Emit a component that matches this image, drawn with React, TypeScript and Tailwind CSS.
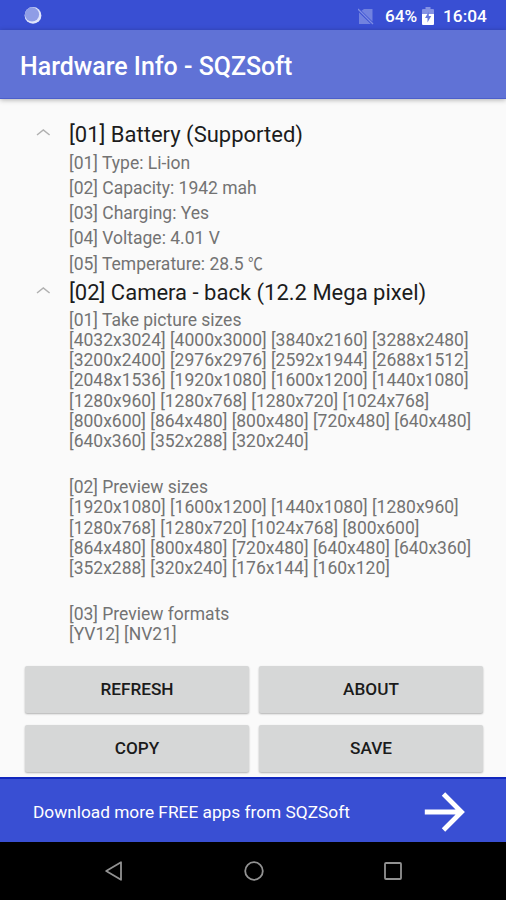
const battery = [
  ['[01] Type: Li-ion'],
  ['[02] Capacity: 1942 mah'],
  ['[03] Charging: Yes'],
  ['[04] Voltage: 4.01 V'],
  ['[05] Temperature: 28.5 ', '℃'],
];

const camera = [
  [
    '[01] Take picture sizes',
    '[4032x3024] [4000x3000] [3840x2160] [3288x2480]',
    '[3200x2400] [2976x2976] [2592x1944] [2688x1512]',
    '[2048x1536] [1920x1080] [1600x1200] [1440x1080]',
    '[1280x960] [1280x768] [1280x720] [1024x768]',
    '[800x600] [864x480] [800x480] [720x480] [640x480]',
    '[640x360] [352x288] [320x240]',
  ],
  [
    '[02] Preview sizes',
    '[1920x1080] [1600x1200] [1440x1080] [1280x960]',
    '[1280x768] [1280x720] [1024x768] [800x600]',
    '[864x480] [800x480] [720x480] [640x480] [640x360]',
    '[352x288] [320x240] [176x144] [160x120]',
  ],
  ['[03] Preview formats', '[YV12] [NV21]'],
];

function GroupHeading({ title }: { title: string }) {
  return (
    <div className="flex h-8 items-center">
      <div className="flex w-[69px] pl-9">
        <svg width="15" height="8" viewBox="0 0 15 8" className="-mt-1" fill="none" stroke="#b0b0b0" strokeWidth="1.5">
          <path d="M1 7 L7.3 2 L13.6 7" />
        </svg>
      </div>
      <h2 className="pt-px text-[22px] leading-8 text-[#1c1c1c]">{title}</h2>
    </div>
  );
}

function Button({ label }: { label: string }) {
  return (
    <button className="h-[47px] rounded-[2px] bg-[#d6d7d7] text-[17.2px] font-medium text-[#1b1b1b] shadow-[0_1px_2px_rgba(0,0,0,0.3)]">
      {label}
    </button>
  );
}

export default function App() {
  return (
    <div className="flex h-[900px] w-[506px] flex-col overflow-hidden bg-[#fafafa] font-['Roboto','Noto_Sans_CJK_JP',sans-serif] whitespace-nowrap">
      <div className="flex h-[30px] shrink-0 items-center bg-[#394fd3] pt-0.5 pl-6 text-white">
        <svg width="18" height="18" viewBox="0 0 18 18">
          <circle cx="9" cy="8.4" r="8.4" fill="#e0e5fb" />
          <circle cx="8" cy="7.4" r="7.1" fill="#8f9de6" />
        </svg>
        <svg width="16" height="17" viewBox="0 0 16 17" className="ml-[316px]">
          <path d="M6 1h8.5v12.5L3.5 2.8zM1 4.5V16h11.8z" fill="#7182df" />
          <path d="M0 1L15 16" stroke="#7d8ce3" strokeWidth="1.3" />
        </svg>
        <span className="ml-[11px] w-8 text-[17.2px] leading-[30px] font-medium">64%</span>
        <svg width="12" height="19" viewBox="0 0 12 19" className="ml-[5px]">
          <path d="M3.5 0h5v2H11q1 0 1 1v6H0V3q0-1 1-1h2.5z" fill="#8492e4" />
          <path d="M0 7h12v10q0 1-1 1H1q-1 0-1-1z" fill="#fff" />
          <path d="M6.8 4.8L3 11h2.5v4.5L9.2 9H6.8z" fill="#6678dc" />
        </svg>
        <span className="ml-[9px] text-[17.3px] leading-[30px] font-medium">16:04</span>
      </div>

      <header className="flex h-[69px] shrink-0 items-center border-b border-[#4c5fcb] bg-[#6072d6] pl-5 text-white shadow-[0_1px_5px_rgba(0,0,0,0.3)]">
        <h1 className="pt-[5px] text-[24.95px] font-medium">Hardware Info - SQZSoft</h1>
      </header>

      <main className="flex h-[567px] shrink-0 flex-col pt-[19px] text-[17.5px] text-[#737373]">
        <GroupHeading title="[01] Battery (Supported)" />
        <div className="h-[126px] pt-[0.6px] pl-[69px]">
          {battery.map(([line, unit]) => (
            <p key={line} className="h-[25.3px] leading-[25.3px] whitespace-pre">
              {line}
              {unit && <span className="inline-block origin-left scale-x-[0.85]">{unit}</span>}
            </p>
          ))}
        </div>
        <GroupHeading title="[02] Camera - back (12.2 Mega pixel)" />
        <div className="flex flex-col gap-[26px] pt-[1.8px] pl-[69px]">
          {camera.map((block) => (
            <div key={block[0]}>
              {block.map((line) => (
                <p key={line} className="leading-[20.2px]">{line}</p>
              ))}
            </div>
          ))}
        </div>
      </main>

      <div className="grid h-[111px] shrink-0 grid-cols-2 content-start gap-x-[10px] gap-y-3 pr-[23px] pl-[25px]">
        <Button label="REFRESH" />
        <Button label="ABOUT" />
        <Button label="COPY" />
        <Button label="SAVE" />
      </div>

      <div className="flex h-[65px] shrink-0 items-center justify-between border-t-2 border-[#1127bd] bg-[#394fd3] pr-[41px] pl-[33px] text-white">
        <span className="pt-1 text-[17.3px]">Download more FREE apps from SQZSoft</span>
        <svg width="41" height="40" viewBox="0 0 41 40" className="mt-0.5" fill="none" stroke="#fff" strokeWidth="4.8">
          <path d="M0.8 20H37M19.5 2L37.5 20L19.5 38" />
        </svg>
      </div>

      <nav className="flex flex-1 items-center justify-between bg-black pr-[103px] pl-[104px]">
        <svg width="20" height="20" viewBox="0 0 20 20" fill="none" stroke="#929292" strokeWidth="1.8">
          <path d="M17 1.2V18.8L2.2 10z" strokeLinejoin="round" />
        </svg>
        <svg width="20" height="20" viewBox="0 0 20 20" fill="none" stroke="#929292" strokeWidth="1.8">
          <circle cx="10" cy="10" r="8.8" />
        </svg>
        <svg width="20" height="20" viewBox="0 0 20 20" fill="none" stroke="#929292" strokeWidth="1.8">
          <rect x="2" y="2" width="16" height="16" rx="1" />
        </svg>
      </nav>
    </div>
  );
}
